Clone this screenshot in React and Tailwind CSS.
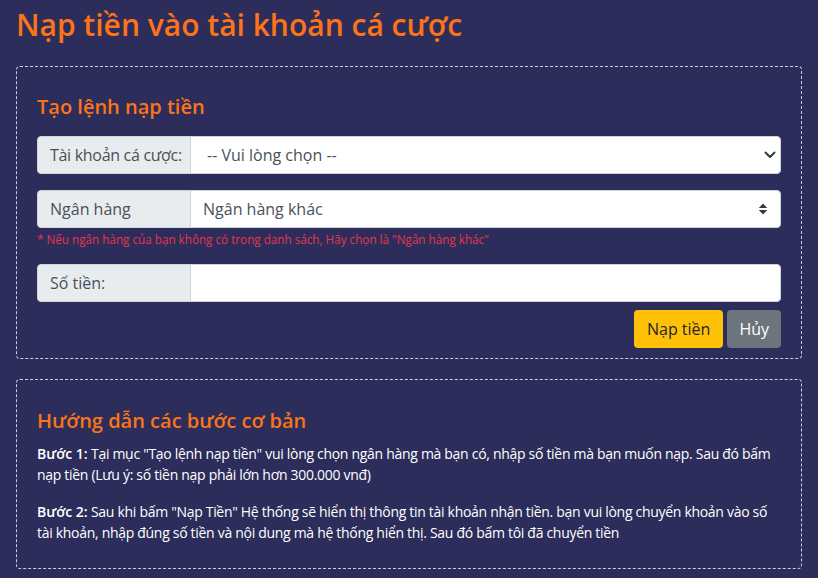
import React from "react";

function UpDown() {
  return (
    <svg width="10" height="12" viewBox="0 0 10 12">
      <path d="M5 0.5 L9.2 5 L0.8 5 Z" fill="#343a40" />
      <path d="M5 11.5 L9.2 7 L0.8 7 Z" fill="#343a40" />
    </svg>
  );
}

export default function App() {
  return (
    <div className="min-h-[578px] w-full bg-[#2c2d5a] px-4 pt-[7px] pb-2 font-['Open_Sans',sans-serif] text-white">
      <h1 className="text-[30px] font-semibold leading-[36px] text-[#fb7419]">
        Nạp tiền vào tài khoản cá cược
      </h1>

      <div className="mt-[23px] rounded-[4px] border border-dashed border-[#cfd0da] px-5 pt-[28px] pb-[10px]">
        <h2 className="text-[20px] font-semibold leading-[1.2] text-[#fb7419]">Tạo lệnh nạp tiền</h2>

        <div className="mt-[17px] flex h-[38px]">
          <div className="flex w-[154px] shrink-0 items-center whitespace-nowrap rounded-l-[4px] border border-[#ced4da] bg-[#e9ecef] pl-3 text-[16px] tracking-[-0.3px] text-[#495057]">
            Tài khoản cá cược:
          </div>
          <div className="relative -ml-px flex flex-1 items-center rounded-r-[4px] border border-[#ced4da] bg-white pl-4 text-[16px] text-[#495057]">
            -- Vui lòng chọn --
            <div className="absolute right-[4px] top-1/2 flex h-[10px] w-[12px] -translate-y-1/2 items-center justify-center">
              <svg width="12" height="8" viewBox="0 0 12 8">
                <path d="M1.5 1.5 L6 6 L10.5 1.5" fill="none" stroke="#343a40" strokeWidth="2" strokeLinecap="round" strokeLinejoin="round" />
              </svg>
            </div>
          </div>
        </div>

        <div className="mt-4 flex h-[38px]">
          <div className="flex w-[154px] shrink-0 items-center rounded-l-[4px] border border-[#ced4da] bg-[#e9ecef] px-3 text-[16px] text-[#495057]">
            Ngân hàng
          </div>
          <div className="relative -ml-px flex flex-1 items-center rounded-r-[4px] border border-[#ced4da] bg-white pl-3 text-[16px] text-[#495057]">
            Ngân hàng khác
            <div className="absolute right-[12px] top-1/2 flex -translate-y-1/2">
              <UpDown />
            </div>
          </div>
        </div>
        <p className="mt-[3px] text-[11.7px] leading-[16px] text-[#e8344e]">
          * Nếu ngân hàng của bạn không có trong danh sách, Hãy chọn là "Ngân hàng khác"
        </p>

        <div className="mt-[17px] flex h-[38px]">
          <div className="flex w-[154px] shrink-0 items-center rounded-l-[4px] border border-[#ced4da] bg-[#e9ecef] px-3 text-[16px] text-[#495057]">
            Số tiền:
          </div>
          <div className="-ml-px flex-1 rounded-r-[4px] border border-[#ced4da] bg-white"></div>
        </div>

        <div className="mt-[8px] flex justify-end gap-[4px]">
          <button className="h-[38px] rounded-[4px] bg-[#ffc107] px-[13px] text-[16px] text-[#212529]">Nạp tiền</button>
          <button className="h-[38px] rounded-[4px] bg-[#6c757d] px-3 text-[16px] text-white">Hủy</button>
        </div>
      </div>

      <div className="mt-[20px] rounded-[4px] border border-dashed border-[#cfd0da] px-5 pt-[29px] pb-[25px]">
        <h2 className="text-[20px] font-semibold leading-[1.2] text-[#fb7419]">Hướng dẫn các bước cơ bản</h2>
        <p className="mt-[10px] text-[14px] leading-[21px] tracking-[-0.3px]">
          <b className="font-semibold tracking-normal">Bước 1:</b> Tại mục "Tạo lệnh nạp tiền" vui lòng chọn ngân hàng mà bạn có, nhập số tiền mà bạn muốn nạp. Sau đó bấm nạp tiền (Lưu ý: số tiền nạp phải lớn hơn 300.000 vnđ)
        </p>
        <p className="mt-4 text-[14px] leading-[21px] tracking-[-0.3px]">
          <b className="font-semibold tracking-normal">Bước 2:</b> Sau khi bấm "Nạp Tiền" Hệ thống sẽ hiển thị thông tin tài khoản nhận tiền. bạn vui lòng chuyển khoản vào số tài khoản, nhập đúng số tiền và nội dung mà hệ thống hiển thị. Sau đó bấm tôi đã chuyển tiền
        </p>
      </div>
    </div>
  );
}
